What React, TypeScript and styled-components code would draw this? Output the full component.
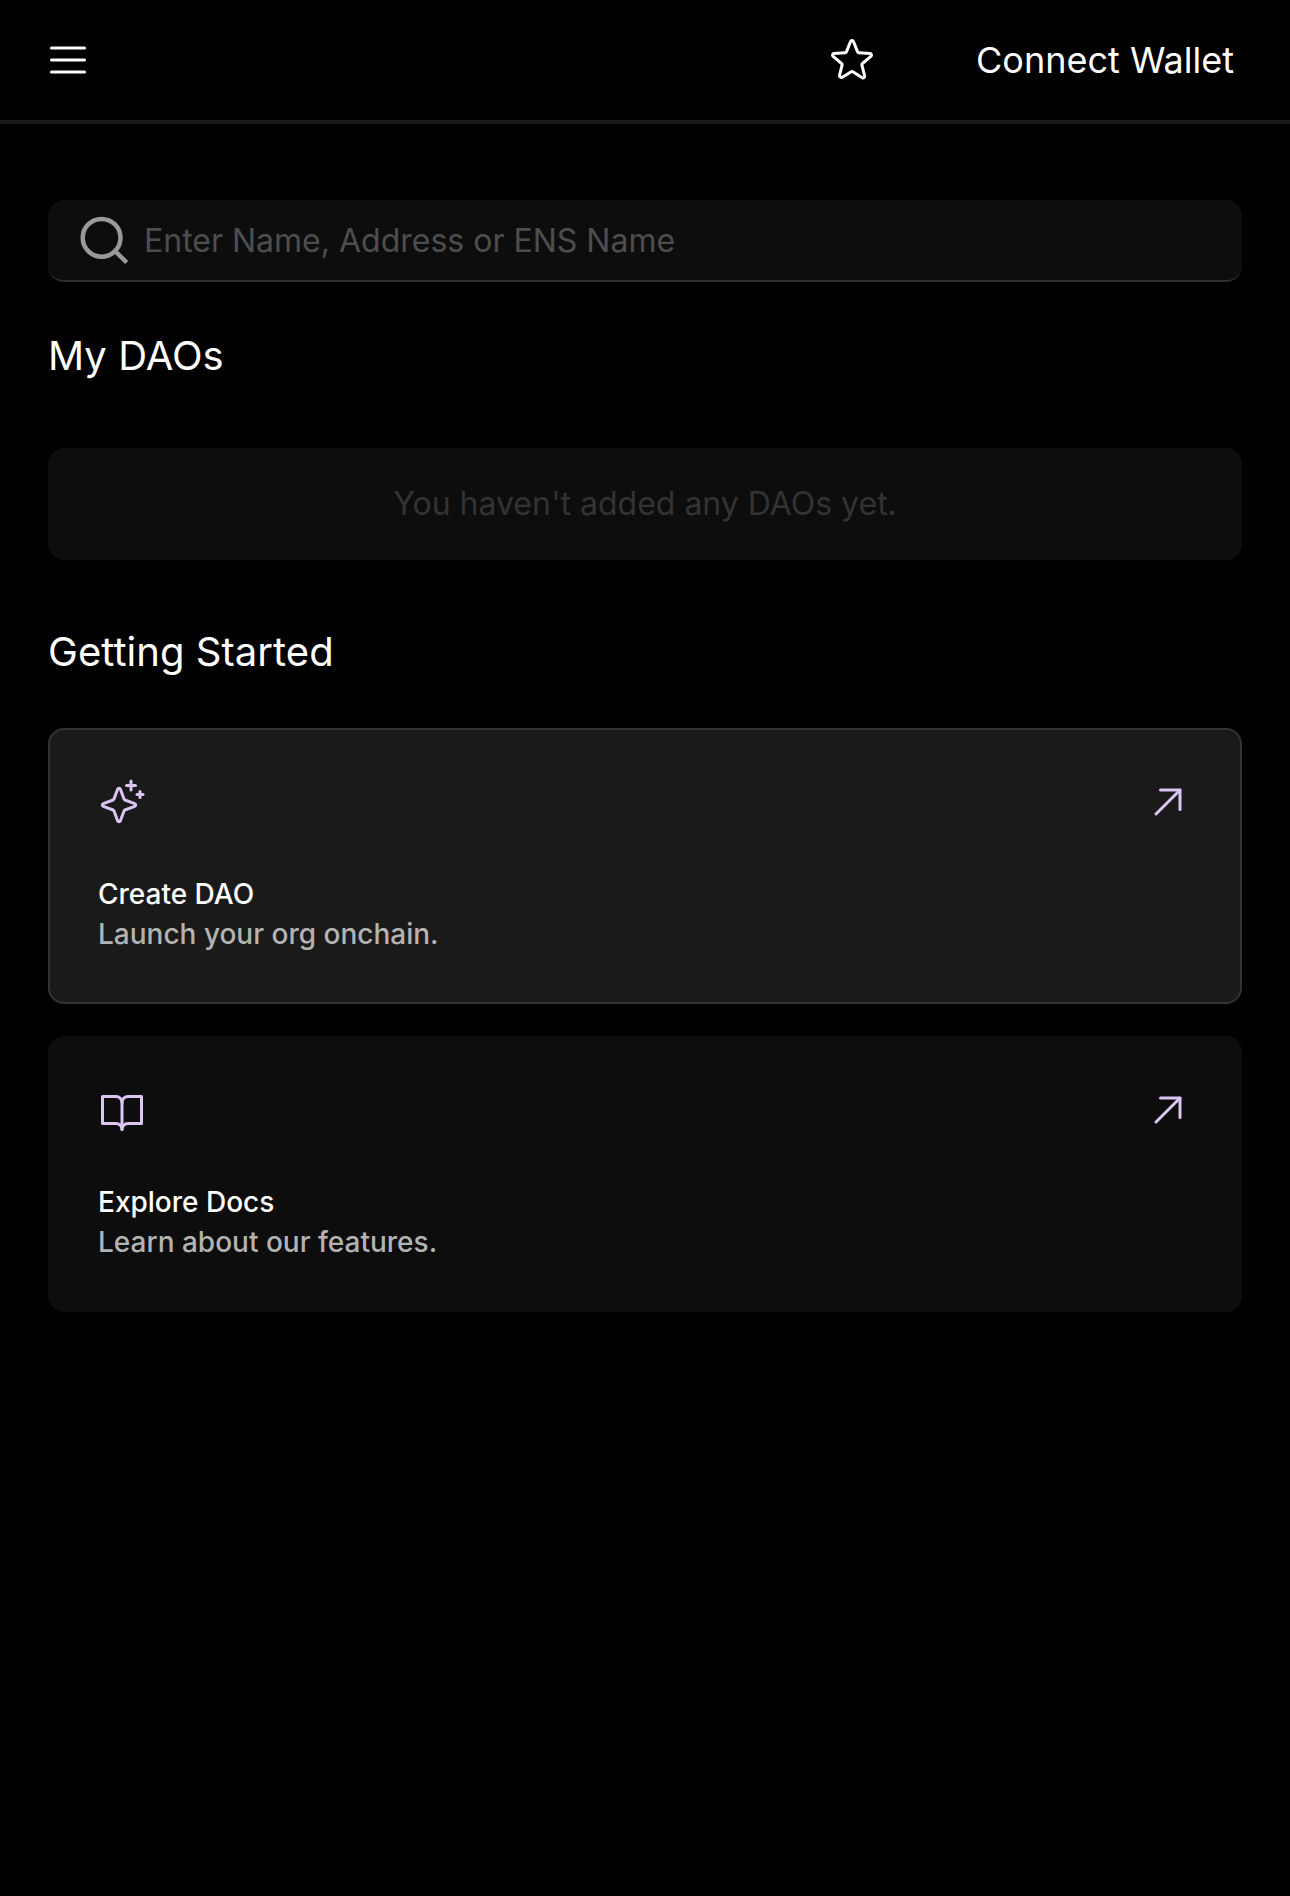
import React from "react";
import styled, { createGlobalStyle } from "styled-components";

const GlobalStyle = createGlobalStyle`
  * { box-sizing: border-box; }
  body {
    margin: 0;
    background: #000;
    color: #fff;
    font-family: Inter, "Liberation Sans", sans-serif;
    -webkit-font-smoothing: antialiased;
  }
`;

const Page = styled.div`
  min-height: 1896px;
  background: #000;
`;

const Header = styled.header`
  display: flex;
  align-items: center;
  justify-content: space-between;
  height: 122px;
  padding: 0 41px 0 44px;
  border-bottom: 2px solid #1a1a1a;
  box-shadow: 0 2px 0 #15151a;
`;

const HeaderActions = styled.div`
  display: flex;
  align-items: center;
  gap: 84px;
`;

const IconButton = styled.button`
  display: flex;
  padding: 0;
  border: 0;
  background: none;
  color: #fff;
`;

const WalletButton = styled.button`
  padding: 0 15px 0 16px;
  border: 0;
  background: none;
  color: #fff;
  font: 400 36px/48px Inter, "Liberation Sans", sans-serif;
  white-space: nowrap;
`;

const Main = styled.main`
  display: flex;
  flex-direction: column;
  padding: 78px 48px 0;
`;

const SearchBox = styled.label`
  display: flex;
  align-items: center;
  gap: 12px;
  height: 82px;
  padding: 0 32px;
  border-bottom: 2px solid #2c2c2c;
  border-radius: 16px;
  background: #0d0d0d;
`;

const SearchInput = styled.input`
  flex: 1;
  min-width: 0;
  padding: 2px 0 0;
  border: 0;
  outline: 0;
  background: none;
  color: #fff;
  font: 400 32px/48px Inter, "Liberation Sans", sans-serif;
  &::placeholder {
    color: #4d4d4d;
    opacity: 1;
  }
`;

const Heading = styled.h2<{ $top: number; $bottom: number }>`
  margin: ${(p) => p.$top}px 0 ${(p) => p.$bottom}px;
  font-size: 40px;
  font-weight: 400;
  line-height: 52px;
  letter-spacing: 0.04px;
`;

const EmptyState = styled.div`
  display: flex;
  align-items: center;
  justify-content: center;
  height: 112px;
  border-radius: 16px;
  background: #0d0d0d;
  color: #333;
  font-size: 32px;
  line-height: 48px;
`;

const CardList = styled.div`
  display: flex;
  flex-direction: column;
  gap: 32px;
`;

const Card = styled.a<{ $active?: boolean }>`
  display: flex;
  flex-direction: column;
  height: 276px;
  padding: 48px;
  border: 2px solid ${(p) => (p.$active ? "#333" : "#0d0d0d")};
  border-radius: 16px;
  background: ${(p) => (p.$active ? "#1a1a1a" : "#0d0d0d")};
  color: #dcc5f3;
`;

const CardIcons = styled.div`
  display: flex;
  justify-content: space-between;
  margin-bottom: 48px;
`;

const CardTitle = styled.span`
  color: #fff;
  font-size: 28px;
  font-weight: 500;
  line-height: 40px;
`;

const CardText = styled(CardTitle)`
  color: #b3b3b3;
`;

const Svg = styled.svg`
  display: block;
  flex: none;
  fill: none;
  stroke: currentColor;
  stroke-width: 16;
  stroke-linecap: round;
  stroke-linejoin: round;
`;

const SearchSvg = styled.svg`
  display: block;
  flex: none;
  fill: none;
  stroke: #999;
  stroke-width: 4.5;
`;

const Icon = ({ paths }: { paths: string[] }) => (
  <Svg width="48" height="48" viewBox="0 0 256 256">
    {paths.map((d) => (
      <path key={d} d={d} />
    ))}
  </Svg>
);

const menu = ["M40 64H216", "M40 128H216", "M40 192H216"];
const star = [
  "M132.4,190.4l50.4,32c6.5,4.1,14.5-2,12.6-9.5l-14.6-57.4a8.7,8.7,0,0,1,2.9-8.8l45.2-37.7c5.9-4.9,2.9-14.8-4.8-15.3l-59-3.8a8.3,8.3,0,0,1-7.3-5.4l-22-55.4a8.3,8.3,0,0,0-15.6,0l-22,55.4a8.3,8.3,0,0,1-7.3,5.4l-59,3.8c-7.7.5-10.7,10.4-4.8,15.3L72.3,146.7a8.7,8.7,0,0,1,2.9,8.8L61.7,208.7c-2.3,9,7.3,16.3,15,11.4l46.9-29.7A8.2,8.2,0,0,1,132.4,190.4Z",
];
const sparkle = [
  "M138.7,175.5l-19.2,52.1a8,8,0,0,1-15,0L85.3,175.5a8.1,8.1,0,0,0-4.8-4.8L28.4,151.5a8,8,0,0,1,0-15l52.1-19.2a8.1,8.1,0,0,0,4.8-4.8l19.2-52.1a8,8,0,0,1,15,0l19.2,52.1a8.1,8.1,0,0,0,4.8,4.8l52.1,19.2a8,8,0,0,1,0,15l-52.1,19.2A8.1,8.1,0,0,0,138.7,175.5Z",
  "M176 16V64",
  "M200 40H152",
  "M224 72V104",
  "M240 88H208",
];
const book = [
  "M128,88a32,32,0,0,1,32-32h72V200H160a32,32,0,0,0-32,32",
  "M24,200H96a32,32,0,0,1,32,32V88A32,32,0,0,0,96,56H24Z",
];
const arrow = ["M64 192L192 64", "M88 64H192V168"];

const cards = [
  { title: "Create DAO", text: "Launch your org onchain.", icon: sparkle, active: true },
  { title: "Explore Docs", text: "Learn about our features.", icon: book, active: false },
];

export default function App() {
  return (
    <Page>
      <GlobalStyle />
      <Header>
        <IconButton aria-label="Menu">
          <Icon paths={menu} />
        </IconButton>
        <HeaderActions>
          <IconButton aria-label="Favorites">
            <Icon paths={star} />
          </IconButton>
          <WalletButton>Connect Wallet</WalletButton>
        </HeaderActions>
      </Header>
      <Main>
        <SearchBox>
          <SearchSvg width="52" height="52" viewBox="0 0 52 52">
            <circle cx="21.6" cy="23.8" r="18.9" />
            <path d="M34.5 36.5L46.7 48.5" />
          </SearchSvg>
          <SearchInput placeholder="Enter Name, Address or ENS Name" />
        </SearchBox>
        <Heading $top={48} $bottom={66}>My DAOs</Heading>
        <EmptyState>You haven't added any DAOs yet.</EmptyState>
        <Heading $top={66} $bottom={50}>Getting Started</Heading>
        <CardList>
          {cards.map((card) => (
            <Card key={card.title} $active={card.active}>
              <CardIcons>
                <Icon paths={card.icon} />
                <Icon paths={arrow} />
              </CardIcons>
              <CardTitle>{card.title}</CardTitle>
              <CardText>{card.text}</CardText>
            </Card>
          ))}
        </CardList>
      </Main>
    </Page>
  );
}
